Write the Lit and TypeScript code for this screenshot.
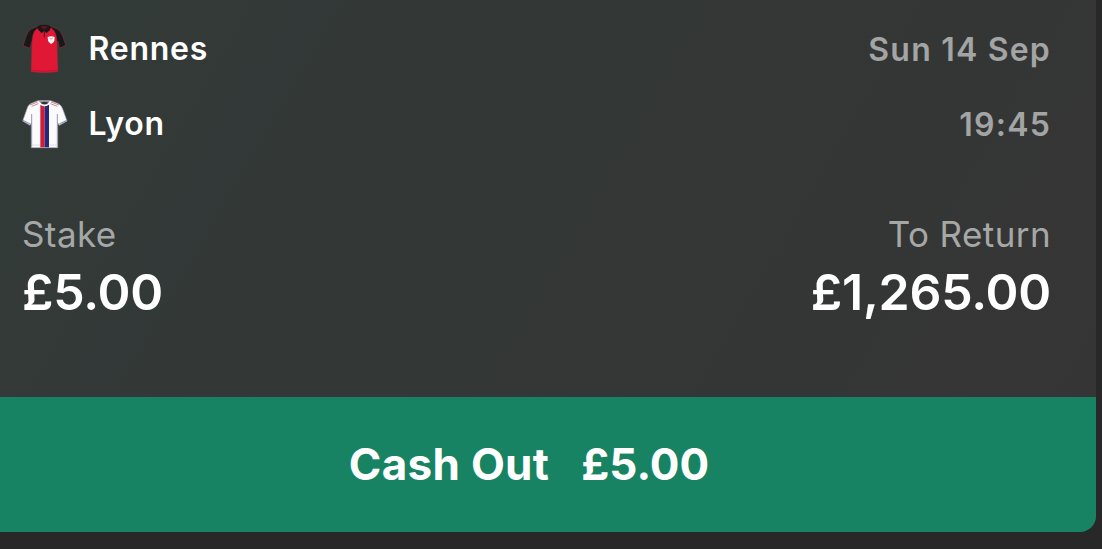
import { LitElement, html, css, svg } from 'lit';
import { customElement, property } from 'lit/decorators.js';

@customElement('team-shirt')
export class TeamShirt extends LitElement {
  static styles = css`
    :host {
      display: block;
      width: 46px;
      height: 50px;
    }

    svg {
      display: block;
    }
  `;

  @property() team = '';

  rennes() {
    return svg`
      <path d="M84 48 L63 57 Q52 65 47 82 L39 107 L60 115 L66 94 L144 94 L148 115 L168 106 L158 78 Q152 62 142 57 L121 48 Z" fill="#1b1719" stroke="#70303b" stroke-width="2.5"/>
      <path d="M82 55 Q66 67 66 98 L63 185 Q103 191 144 185 L141 98 Q141 67 124 54 L103 60 Z" fill="#e01735" stroke="#8d2b3c" stroke-width="1.5"/>
      <path d="M65 181 Q103 187 142 181" fill="none" stroke="#af1730" stroke-width="2"/>
      <path d="M83 48 Q102 41 121 48 L120 60 L109 70 L103 62 L95 70 L83 57 Z" fill="#1b1719"/>
      <path d="M90 50 Q102 46 114 50 L103 59 Z" fill="#591522"/>
      <path d="M103 62 L103 82" stroke="#54101d" stroke-width="3"/>
      <path d="M113 81 Q123 76 134 81 L133 93 Q130 99 123 102 Q115 98 114 91 Z" fill="#fff4f4"/>
      <path d="M119 84 L123 88 L128 84" fill="none" stroke="#d94255" stroke-width="2"/>
    `;
  }

  lyon() {
    return svg`
      <path d="M84 38 L62 47 Q53 51 49 68 L38 99 L60 112 L64 104 L64 179 L143 179 L143 104 L148 112 L171 99 L160 68 Q155 51 145 47 L122 38 Z" fill="#fbfafc" stroke="#a6a4b5" stroke-width="2"/>
      <path d="M91 49 L104 53 L104 178 L91 178 Z" fill="#d01c35"/>
      <path d="M104 53 L117 49 L117 178 L104 178 Z" fill="#25277b"/>
      <path d="M83 42 L60 51 M85 47 L65 55 M123 42 L147 51 M121 47 L142 55" stroke="#cf8995" stroke-width="3"/>
      <path d="M85 39 Q103 34 121 39 L116 48 Q104 54 91 48 Z" fill="#9b9aa1"/>
      <path d="M93 43 Q104 39 114 43 L111 48 L96 48 Z" fill="#3b3038"/>
      <path d="M85 40 Q93 53 104 53 Q115 53 121 40" fill="none" stroke="#fff" stroke-width="4"/>
      <path d="M39 97 L60 108 M148 108 L170 97" stroke="#8389ad" stroke-width="3"/>
      <path d="M65 78 V177 M142 78 V177" stroke="#9899b4" stroke-width="3"/>
      <path d="M65 171 H90 M118 171 H142" stroke="#d5d2dd" stroke-width="2"/>
    `;
  }

  render() {
    const lyon = this.team === 'Lyon';
    return html`
      <svg width="46" height="50" viewBox=${lyon ? '36 33 138 150' : '36 42 138 150'}>
        ${lyon ? this.lyon() : this.rennes()}
      </svg>
    `;
  }
}

@customElement('app-root')
export class AppRoot extends LitElement {
  static styles = css`
    :host {
      display: block;
      height: 549px;
      overflow: hidden;
      background: #282828;
      color: #fff;
      font-family: Inter, 'Liberation Sans', sans-serif;
    }

    .card {
      display: flex;
      flex-direction: column;
      width: 1096px;
      height: 532px;
      border-radius: 0 0 16px 0;
      overflow: hidden;
      background: linear-gradient(120deg, #323b38 0%, #333837 30%, #343635 72%, #363535 100%);
    }

    .details {
      flex: 1;
      padding: 11px 45px 0 22px;
    }

    .row {
      display: flex;
      align-items: center;
      height: 75px;
      font-size: 32px;
      font-weight: 600;
    }

    .team {
      margin-left: 20.5px;
      letter-spacing: 0.75px;
    }

    .when {
      margin-left: auto;
      padding-top: 2px;
      color: #a3a4a4;
      letter-spacing: 1.2px;
    }

    .totals {
      display: flex;
      justify-content: space-between;
      padding-top: 51px;
    }

    .label {
      font-size: 35px;
      line-height: 44px;
      color: #a6a8a7;
      letter-spacing: 0.4px;
    }

    .value {
      font-size: 50px;
      line-height: 60px;
      padding-top: 6px;
      font-weight: 600;
      letter-spacing: -0.25px;
    }

    .return {
      text-align: right;
    }

    .cashout {
      display: flex;
      justify-content: center;
      align-items: center;
      gap: 32px;
      height: 135px;
      padding: 0 38px 2px 0;
      border: none;
      background: #178363;
      color: #fff;
      font-family: inherit;
      font-size: 44px;
      font-weight: 650;
      letter-spacing: 0.3px;
    }

    .amount {
      letter-spacing: 0;
    }
  `;

  @property({ type: Array }) teams = [
    { name: 'Rennes', when: 'Sun 14 Sep' },
    { name: 'Lyon', when: '19:45' },
  ];

  @property() stake = '£5.00';

  @property() toReturn = '£1,265.00';

  render() {
    return html`
      <div class="card">
        <div class="details">
          ${this.teams.map((t) => html`
            <div class="row">
              <team-shirt team=${t.name}></team-shirt>
              <span class="team">${t.name}</span>
              <span class="when">${t.when}</span>
            </div>
          `)}
          <div class="totals">
            <div>
              <div class="label">Stake</div>
              <div class="value">${this.stake}</div>
            </div>
            <div class="return">
              <div class="label">To Return</div>
              <div class="value">${this.toReturn}</div>
            </div>
          </div>
        </div>
        <button class="cashout">
          <span class="action">Cash Out</span>
          <span class="amount">${this.stake}</span>
        </button>
      </div>
    `;
  }
}
